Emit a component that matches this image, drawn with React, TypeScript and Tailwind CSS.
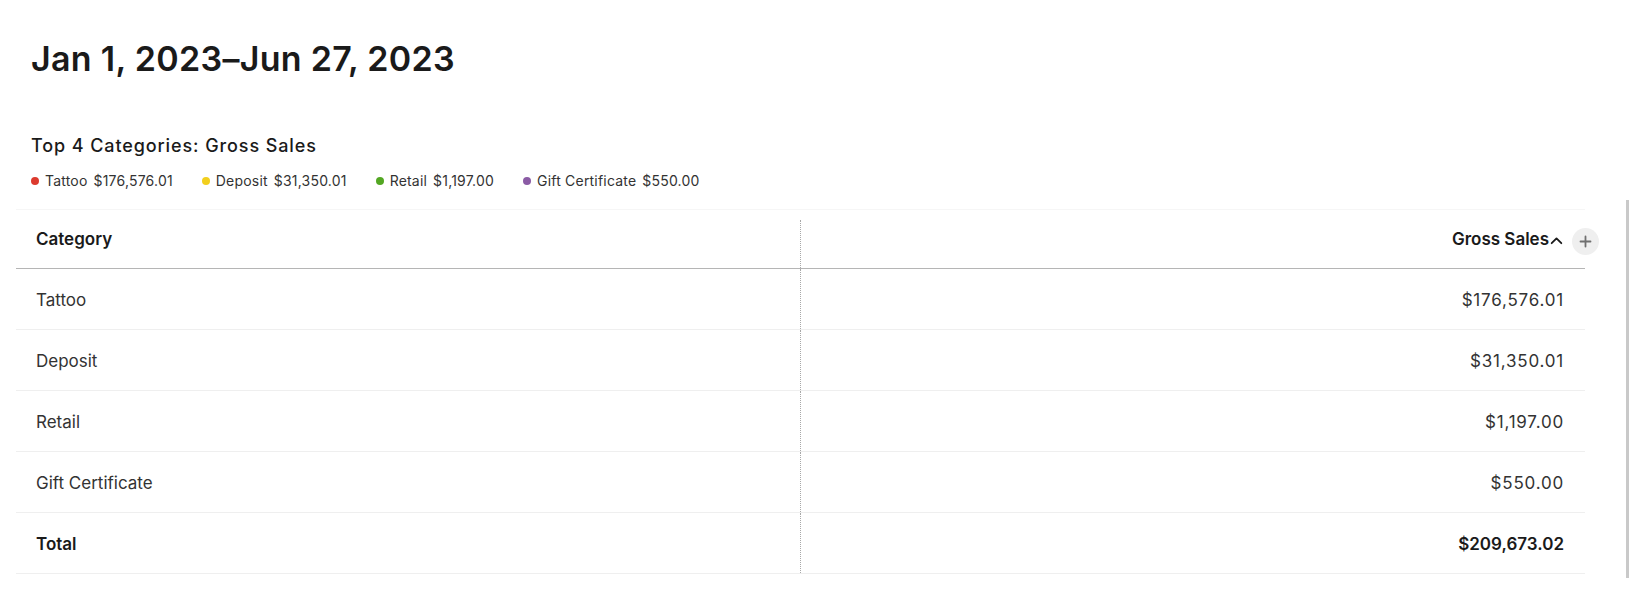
import React from 'react';

const legend = [
  { name: 'Tattoo', value: '$176,576.01', color: 'bg-[#dc3a2e]' },
  { name: 'Deposit', value: '$31,350.01', color: 'bg-[#f2cf1d]' },
  { name: 'Retail', value: '$1,197.00', color: 'bg-[#53a723]' },
  { name: 'Gift Certificate', value: '$550.00', color: 'bg-[#8b5ba5]' },
];

const rows = [
  { name: 'Tattoo', value: '$176,576.01' },
  { name: 'Deposit', value: '$31,350.01' },
  { name: 'Retail', value: '$1,197.00' },
  { name: 'Gift Certificate', value: '$550.00' },
];

export default function App() {
  return (
    <div className="relative h-[601px] w-[1629px] overflow-hidden bg-white font-['Inter',sans-serif] text-[#1a1a1a]">
      {/* Header */}
      <div className="pl-[31px] pt-[42px]">
        <h1 className="text-[34px] font-semibold leading-none tracking-[0.3px]">Jan 1, 2023–Jun 27, 2023</h1>
        <h2 className="mt-[58px] text-[18px] font-medium leading-[24px] tracking-[0.9px]">Top 4 Categories: Gross Sales</h2>
        <div className="mt-[14px] flex h-[18px] items-center gap-[29px] text-[14px] leading-[18px] tracking-[0.2px] text-[#333]">
          {legend.map((item) => (
            <div key={item.name} className="flex items-center">
              <span className={`mr-[6px] h-[8px] w-[8px] rounded-full ${item.color}`} />
              <span>{item.name}</span>
              <span className="ml-[6px]">{item.value}</span>
            </div>
          ))}
        </div>
      </div>

      {/* Table */}
      <div className="relative ml-[16px] mt-[19px] w-[1569px] border-t border-[#f6f6f6]">
        <div className="grid h-[59px] grid-cols-2 border-b-[1.5px] border-[#b5b5b5] text-[17px] font-semibold">
          <div className="mt-[10px] flex items-center border-r border-dotted border-[#a8a8a8] pb-[9px] pl-[20px]">Category</div>
          <div className="flex items-center justify-end pr-[21px] pt-[1px]">
            <span>Gross Sales</span>
            <svg width="15" height="15" viewBox="0 0 14 14" fill="none" className="mt-[1px]">
              <path d="M2.5 9.5L7 5L11.5 9.5" stroke="#1a1a1a" strokeWidth="1.7" strokeLinecap="round" strokeLinejoin="round" />
            </svg>
          </div>
        </div>

        {rows.map((row) => (
          <div key={row.name} className="grid h-[61px] grid-cols-2 border-b border-[#efefef] text-[17px] text-[#333]">
            <div className="flex items-center border-r border-dotted border-[#a8a8a8] pl-[20px] pt-[3px]">{row.name}</div>
            <div className="flex items-center justify-end pr-[21px] pt-[3px] tracking-[0.8px]">{row.value}</div>
          </div>
        ))}

        <div className="grid h-[61px] grid-cols-2 border-b border-[#efefef] text-[17px] font-semibold">
          <div className="flex items-center border-r border-dotted border-[#a8a8a8] pl-[20px] pt-[4px]">Total</div>
          <div className="flex items-center justify-end pr-[21px] pt-[4px]">$209,673.02</div>
        </div>

        {/* add column button */}
        <button className="absolute right-[-14px] top-[18px] flex h-[27px] w-[27px] items-center justify-center rounded-full bg-[#efefef]">
          <svg width="13" height="13" viewBox="0 0 13 13" fill="none">
            <path d="M6.5 1.5V11.5M1.5 6.5H11.5" stroke="#707070" strokeWidth="1.8" strokeLinecap="round" />
          </svg>
        </button>
      </div>

      {/* scrollbar */}
      <div className="absolute right-0 top-[200px] h-[378px] w-[3px] bg-[#c9c9c9]" />
    </div>
  );
}
